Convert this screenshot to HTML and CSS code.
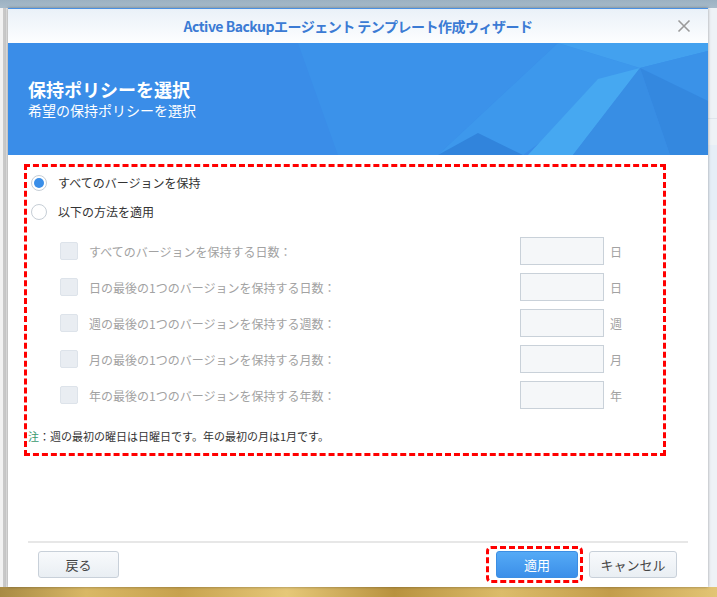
FILE: index.html
```html
<!DOCTYPE html>
<html lang="ja">
<head>
<meta charset="utf-8">
<title>Active Backup</title>
<link rel="stylesheet" href="styles.css">
</head>
<body>
<div class="stage">
  <div class="dialog">
    <div class="titlebar">
      <span class="title">Active Backupエージェント テンプレート作成ウィザード</span>
      <span class="close">
        <svg width="14" height="14" viewBox="0 0 14 14"><path d="M1.5 1.5 L12.5 12.5 M12.5 1.5 L1.5 12.5" stroke="#9a9a9a" stroke-width="1.6" fill="none"/></svg>
      </span>
    </div>
    <div class="banner">
      <svg class="banner-art" width="700" height="112" viewBox="0 0 700 112" preserveAspectRatio="none">
        <polygon points="290,0 550,0 430,112 330,112" fill="#3b92ea"/>
        <polygon points="550,0 632,25 515,112 430,112" fill="#3d98ec"/>
        <polygon points="590,36 632,25 565,112 520,112" fill="#46a8f1"/>
        <polygon points="430,112 515,112 470,90" fill="#3184dc"/>
        <polygon points="550,0 700,0 700,8 632,25" fill="#43a1ef"/>
        <polygon points="632,25 700,8 700,58" fill="#3a92e8"/>
        <polygon points="632,25 700,58 700,112 662,112" fill="#3488df"/>
        <polygon points="632,25 662,112 565,112" fill="#388ee4"/>
      </svg>
      <div class="banner-text">
        <div class="banner-title">保持ポリシーを選択</div>
        <div class="banner-sub">希望の保持ポリシーを選択</div>
      </div>
    </div>
    <div class="content">
      <div class="options">
        <label class="radio-row">
          <span class="radio checked"></span>
          <span class="radio-label">すべてのバージョンを保持</span>
        </label>
        <label class="radio-row">
          <span class="radio"></span>
          <span class="radio-label">以下の方法を適用</span>
        </label>
        <div class="rules">
          <div class="rule">
            <span class="checkbox"></span>
            <span class="rule-label">すべてのバージョンを保持する日数：</span>
            <span class="field"></span>
            <span class="unit">日</span>
          </div>
          <div class="rule">
            <span class="checkbox"></span>
            <span class="rule-label">日の最後の1つのバージョンを保持する日数：</span>
            <span class="field"></span>
            <span class="unit">日</span>
          </div>
          <div class="rule">
            <span class="checkbox"></span>
            <span class="rule-label">週の最後の1つのバージョンを保持する週数：</span>
            <span class="field"></span>
            <span class="unit">週</span>
          </div>
          <div class="rule">
            <span class="checkbox"></span>
            <span class="rule-label">月の最後の1つのバージョンを保持する月数：</span>
            <span class="field"></span>
            <span class="unit">月</span>
          </div>
          <div class="rule">
            <span class="checkbox"></span>
            <span class="rule-label">年の最後の1つのバージョンを保持する年数：</span>
            <span class="field"></span>
            <span class="unit">年</span>
          </div>
        </div>
        <div class="note"><span class="note-key">注</span>：週の最初の曜日は日曜日です。年の最初の月は1月です。</div>
      </div>
      <div class="footer">
        <button class="btn">戻る</button>
        <span class="spacer"></span>
        <span class="highlight"><button class="btn primary">適用</button></span>
        <button class="btn cancel">キャンセル</button>
      </div>
    </div>
  </div>
</div>
</body>
</html>
```

FILE: styles.css
```css
html, body {
  margin: 0;
  padding: 0;
}
body {
  width: 717px;
  height: 597px;
  overflow: hidden;
  font-family: "Noto Sans CJK JP", "Noto Sans", sans-serif;
  background:
    linear-gradient(#9cb1c2, #a8bbca) top left / 100% 8px no-repeat,
    linear-gradient(90deg, #a88a44, #d9b865 12%, #c7a24e 25%, #e6c878 40%, #b8923f 55%, #dcbc6a 70%, #c39d4b 85%, #e3c575) bottom left / 100% 10px no-repeat,
    linear-gradient(90deg, #f2f2f2 0 3px, #c9c9c9 3px 6px, #e4e4e4 6px 8px) left top / 8px 100% no-repeat,
    linear-gradient(#eef2f6 0 118px, #dfe5ec 118px 119px, #eef2f6 119px 145px, #e6eef7 145px 220px, #eef2f6 220px) right top / 9px 100% no-repeat,
    #eef2f6;
}
.stage {
  padding: 8px 0 0 8px;
}
.dialog {
  width: 700px;
  height: 579px;
  background: #fff;
  display: flex;
  flex-direction: column;
  box-shadow: 0 0 3px rgba(0, 0, 0, 0.35);
}
.titlebar {
  height: 35px;
  box-sizing: border-box;
  border-top: 1px solid #4a90e2;
  background: linear-gradient(#eaf1f8, #fdfeff);
  display: flex;
  align-items: center;
  justify-content: center;
  position: relative;
}
.title {
  font-size: 14px;
  font-weight: bold;
  color: #3b7bd4;
  letter-spacing: -0.5px;
}
.close {
  position: absolute;
  right: 17px;
  top: 10px;
  width: 14px;
  height: 14px;
  display: flex;
}
.banner {
  height: 112px;
  background: #3a8de8;
  position: relative;
  overflow: hidden;
  display: flex;
  align-items: center;
}
.banner-art {
  position: absolute;
  left: 0;
  top: 0;
}
.banner-text {
  position: relative;
  padding: 0 0 0 20px;
  color: #fff;
}
.banner-title {
  font-size: 18px;
  font-weight: bold;
  line-height: 22px;
}
.banner-sub {
  font-size: 14px;
  line-height: 20px;
}
.content {
  flex: 1;
  display: flex;
  flex-direction: column;
}
.options {
  margin: 9px 0 0 16px;
  width: 642px;
  box-sizing: border-box;
  border: 3px dashed #ff0000;
  padding: 1px 0 8px 0;
}
.radio-row {
  height: 29px;
  display: flex;
  align-items: center;
  padding-left: 4px;
}
.radio {
  width: 16px;
  height: 16px;
  box-sizing: border-box;
  border: 1px solid #c6ced6;
  border-radius: 50%;
  background: #fff;
  display: flex;
  align-items: center;
  justify-content: center;
}
.radio.checked::after {
  content: "";
  width: 10px;
  height: 10px;
  border-radius: 50%;
  background: #3a8ee8;
}
.radio-label {
  margin-left: 11px;
  font-size: 12px;
  color: #333;
}
.rules {
  margin-top: 7px;
}
.rule {
  height: 36px;
  display: grid;
  grid-template-columns: 18px 1fr 84px 24px;
  align-items: center;
  padding: 0 35px 0 33px;
}
.checkbox {
  width: 18px;
  height: 18px;
  box-sizing: border-box;
  border: 1px solid #dde3ea;
  background: #e9edf2;
  border-radius: 2px;
  margin-top: -1px;
}
.rule-label {
  padding-left: 11px;
  font-size: 12px;
  color: #a2a2a2;
}
.field {
  height: 28px;
  box-sizing: border-box;
  border: 1px solid #c9d1d9;
  background: #f5f7f9;
}
.unit {
  padding-left: 6px;
  font-size: 12px;
  color: #a2a2a2;
}
.note {
  margin-top: 14px;
  padding-left: 1px;
  font-size: 11px;
  line-height: 18px;
  color: #333;
}
.note-key {
  color: #3c9a70;
}
.footer {
  margin: auto 20px 0 20px;
  border-top: 2px solid #e7e7e7;
  padding: 3px 11px 4px 10px;
  display: flex;
  align-items: center;
}
.spacer {
  flex: 1;
}
.btn {
  height: 27px;
  width: 81px;
  box-sizing: border-box;
  border: 1px solid #c8d0d9;
  border-radius: 3px;
  background: linear-gradient(#f8fafc, #e9eef3);
  font-family: "Noto Sans CJK JP", "Noto Sans", sans-serif;
  font-size: 13px;
  color: #444;
  padding: 0;
}
.btn.primary {
  width: 82px;
  border-color: #3c8ee3;
  background: linear-gradient(#55aaf6, #3b8fe9);
  color: #fff;
}
.btn.cancel {
  width: 88px;
}
.highlight {
  display: flex;
  border: 3px dashed #ff0000;
  border-radius: 5px;
  padding: 2px 2px 2px 7px;
  margin-right: 6px;
}
```
